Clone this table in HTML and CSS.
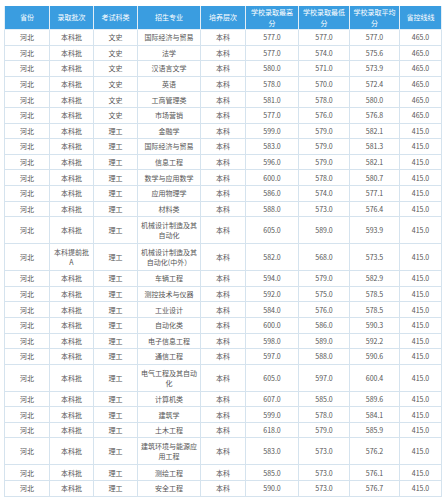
FILE: index.html
```html
<!DOCTYPE html>
<html lang="zh">
<head>
<meta charset="utf-8">
<link rel="stylesheet" href="styles.css">
</head>
<body>
<table class="scores">
<colgroup>
<col class="c1"><col class="c2"><col class="c3"><col class="c4"><col class="c5"><col class="c6"><col class="c7"><col class="c8"><col class="c9">
</colgroup>
<thead>
<tr><th>省份</th><th>录取批次</th><th>考试科类</th><th>招生专业</th><th>培养层次</th><th>学校录取最高<br>分</th><th>学校录取最低<br>分</th><th>学校录取平均<br>分</th><th>省控线线</th></tr>
</thead>
<tbody>
<tr><td>河北</td><td>本科批</td><td>文史</td><td>国际经济与贸易</td><td>本科</td><td>577.0</td><td>577.0</td><td>577.0</td><td>465.0</td></tr>
<tr><td>河北</td><td>本科批</td><td>文史</td><td>法学</td><td>本科</td><td>577.0</td><td>574.0</td><td>575.6</td><td>465.0</td></tr>
<tr><td>河北</td><td>本科批</td><td>文史</td><td>汉语言文学</td><td>本科</td><td>580.0</td><td>571.0</td><td>573.9</td><td>465.0</td></tr>
<tr><td>河北</td><td>本科批</td><td>文史</td><td>英语</td><td>本科</td><td>578.0</td><td>570.0</td><td>572.4</td><td>465.0</td></tr>
<tr><td>河北</td><td>本科批</td><td>文史</td><td>工商管理类</td><td>本科</td><td>581.0</td><td>578.0</td><td>580.0</td><td>465.0</td></tr>
<tr><td>河北</td><td>本科批</td><td>文史</td><td>市场营销</td><td>本科</td><td>577.0</td><td>576.0</td><td>576.8</td><td>465.0</td></tr>
<tr><td>河北</td><td>本科批</td><td>理工</td><td>金融学</td><td>本科</td><td>599.0</td><td>579.0</td><td>582.1</td><td>415.0</td></tr>
<tr><td>河北</td><td>本科批</td><td>理工</td><td>国际经济与贸易</td><td>本科</td><td>583.0</td><td>579.0</td><td>581.3</td><td>415.0</td></tr>
<tr><td>河北</td><td>本科批</td><td>理工</td><td>信息工程</td><td>本科</td><td>596.0</td><td>579.0</td><td>582.1</td><td>415.0</td></tr>
<tr><td>河北</td><td>本科批</td><td>理工</td><td>数学与应用数学</td><td>本科</td><td>600.0</td><td>578.0</td><td>580.7</td><td>415.0</td></tr>
<tr><td>河北</td><td>本科批</td><td>理工</td><td>应用物理学</td><td>本科</td><td>586.0</td><td>574.0</td><td>577.1</td><td>415.0</td></tr>
<tr><td>河北</td><td>本科批</td><td>理工</td><td>材料类</td><td>本科</td><td>588.0</td><td>573.0</td><td>576.4</td><td>415.0</td></tr>
<tr class="tall"><td>河北</td><td>本科批</td><td>理工</td><td>机械设计制造及其<br>自动化</td><td>本科</td><td>605.0</td><td>589.0</td><td>593.9</td><td>415.0</td></tr>
<tr class="tall"><td>河北</td><td>本科提前批<br>A</td><td>理工</td><td>机械设计制造及其<br>自动化(中外）</td><td>本科</td><td>582.0</td><td>568.0</td><td>573.5</td><td>415.0</td></tr>
<tr><td>河北</td><td>本科批</td><td>理工</td><td>车辆工程</td><td>本科</td><td>594.0</td><td>579.0</td><td>582.9</td><td>415.0</td></tr>
<tr><td>河北</td><td>本科批</td><td>理工</td><td>测控技术与仪器</td><td>本科</td><td>592.0</td><td>575.0</td><td>578.5</td><td>415.0</td></tr>
<tr><td>河北</td><td>本科批</td><td>理工</td><td>工业设计</td><td>本科</td><td>584.0</td><td>576.0</td><td>578.5</td><td>415.0</td></tr>
<tr><td>河北</td><td>本科批</td><td>理工</td><td>自动化类</td><td>本科</td><td>600.0</td><td>586.0</td><td>590.3</td><td>415.0</td></tr>
<tr><td>河北</td><td>本科批</td><td>理工</td><td>电子信息工程</td><td>本科</td><td>598.0</td><td>589.0</td><td>592.2</td><td>415.0</td></tr>
<tr><td>河北</td><td>本科批</td><td>理工</td><td>通信工程</td><td>本科</td><td>597.0</td><td>588.0</td><td>590.6</td><td>415.0</td></tr>
<tr class="tall"><td>河北</td><td>本科批</td><td>理工</td><td>电气工程及其自动<br>化</td><td>本科</td><td>605.0</td><td>597.0</td><td>600.4</td><td>415.0</td></tr>
<tr><td>河北</td><td>本科批</td><td>理工</td><td>计算机类</td><td>本科</td><td>607.0</td><td>585.0</td><td>589.6</td><td>415.0</td></tr>
<tr><td>河北</td><td>本科批</td><td>理工</td><td>建筑学</td><td>本科</td><td>599.0</td><td>578.0</td><td>584.1</td><td>415.0</td></tr>
<tr><td>河北</td><td>本科批</td><td>理工</td><td>土木工程</td><td>本科</td><td>618.0</td><td>579.0</td><td>585.9</td><td>415.0</td></tr>
<tr class="tall"><td>河北</td><td>本科批</td><td>理工</td><td>建筑环境与能源应<br>用工程</td><td>本科</td><td>583.0</td><td>573.0</td><td>576.2</td><td>415.0</td></tr>
<tr><td>河北</td><td>本科批</td><td>理工</td><td>测绘工程</td><td>本科</td><td>585.0</td><td>573.0</td><td>576.1</td><td>415.0</td></tr>
<tr><td>河北</td><td>本科批</td><td>理工</td><td>安全工程</td><td>本科</td><td>590.0</td><td>573.0</td><td>576.7</td><td>415.0</td></tr>
</tbody>
</table>
</body>
</html>
```

FILE: styles.css
```css
html, body {
  margin: 0;
  padding: 0;
  background: #ffffff;
}
body {
  padding: 6px 2px 0 4px;
  font-family: "Noto Sans CJK SC", "Microsoft YaHei", sans-serif;
}
.scores {
  border-collapse: collapse;
  table-layout: fixed;
  width: 437px;
  font-size: 7px;
  line-height: 10px;
  color: #555555;
}
.c1 { width: 45px; }
.c2 { width: 44px; }
.c3 { width: 44px; }
.c4 { width: 63px; }
.c5 { width: 45px; }
.c6 { width: 53px; }
.c7 { width: 51px; }
.c8 { width: 50px; }
.c9 { width: 42px; }
.scores th {
  background: #3a9de0;
  color: #ffffff;
  font-weight: normal;
  height: 23px;
  line-height: 10.5px;
  padding: 0 2px;
  border: 1px solid #e3eef6;
  border-top: none;
  text-align: center;
  vertical-align: middle;
}
.scores td {
  height: 14.6px;
  padding: 0 2px;
  border: 1px solid #d5e3ee;
  text-align: center;
  vertical-align: middle;
  white-space: nowrap;
}
.scores tr.tall td {
  height: 26px;
}
```
